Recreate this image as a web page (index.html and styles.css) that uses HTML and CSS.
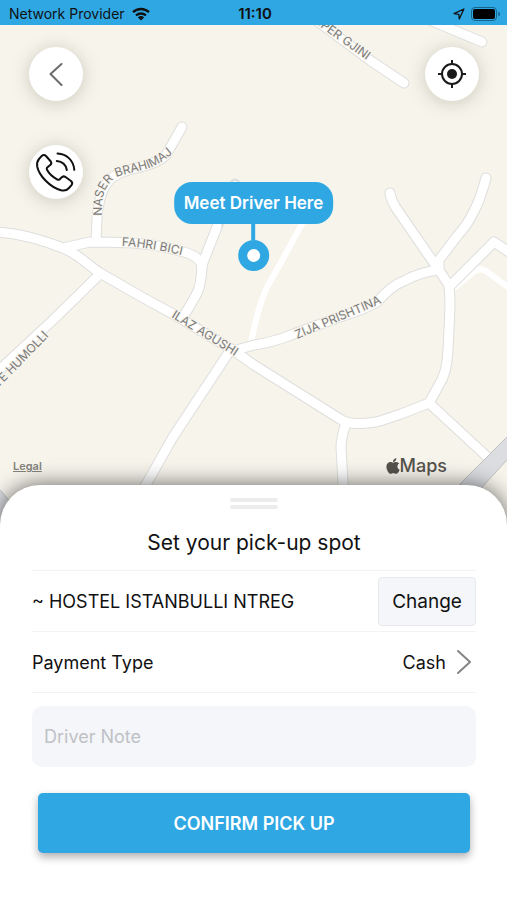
FILE: index.html
```html
<!DOCTYPE html>
<html lang="en">
<head>
  <meta charset="UTF-8" />
  <meta name="viewport" content="width=device-width, initial-scale=1.0"/>
  <title>Set your pick-up spot</title>
  <link rel="stylesheet" href="styles.css">
</head>
<body>
  <header class="status-bar">
    <div class="carrier">
      <span>Network Provider</span>
      <svg width="20" height="14" viewBox="0 0 18 14" fill="none" stroke="currentColor" stroke-width="2.4">
        <path d="M1 5.2a11.6 11.6 0 0 1 16 0"/>
        <path d="M4 8.5a7.3 7.3 0 0 1 10 0"/>
        <path d="M9 13.5 5.9 10.4a4.4 4.4 0 0 1 6.2 0z" fill="currentColor" stroke="none"/>
      </svg>
    </div>
    <time class="clock">11:10</time>
    <div class="indicators">
      <svg width="12" height="12" viewBox="0 0 12 12" fill="none" stroke="currentColor" stroke-width="1.3" stroke-linejoin="round">
        <path d="M10.9 1 1 5.6l4.8.7.5 4.7z"/>
      </svg>
      <svg width="30" height="14" viewBox="0 0 30 14">
        <rect x="0.5" y="0.5" width="25" height="13" rx="3.5" fill="none" stroke="#17658f"/>
        <rect x="2" y="2" width="22" height="10" rx="2" fill="#000"/>
        <path d="M27.3 4.5c2.4 1 2.4 4 0 5z" fill="#17658f"/>
      </svg>
    </div>
  </header>

  <section class="map">
    <svg class="map-canvas" viewBox="0 25 507 500" preserveAspectRatio="xMidYMid slice">
      <defs>
        <g id="roads">
          <path d="M-5 232C20 233 42 240 63 248C78 254 88 265 100 273L140 296L173 314L233 350L254 365L297 392L340 419Q346 423 355 423.500Q369 424 380 421L401 414L429 403L495 464"/>
          <path d="M63 248L90 242Q110 242 133 243Q160 245 180 251Q202 256 202 268"/>
          <path d="M96 242L97 218Q98 203 103 190Q108 178 120 173Q130 169 140 167Q158 163 166 155L182 127"/>
          <path d="M217 227L202 265Q201 286 197 293Q193 301 183 317"/>
          <path d="M99 275L53 320L-5 374"/>
          <path d="M231 349L173 437L147 483L125 521"/>
          <path d="M233 351L254 345Q274 342 291 335L337 318Q365 309 377 302Q392 285 404 281Q420 272 439 270"/>
          <path d="M390 193Q391 200 396 208L434 263L449 285Q450 296 450 307L448 350Q447 373 439 385L429 403"/>
          <path d="M486 178Q480 201 472 215Q467 225 458 235L439 260V268"/>
          <path d="M449 287L494 242L515 256"/>
          <path d="M346 423Q341 438 341 447L343 483V525"/>
          <path d="M300 8L321 24L371 61L404 83"/>
          <path d="M420 16L444 26L482 42"/>
        </g>
        <path id="way-naser" d="M102 216Q101 196 107 187Q113 177 123 175L146 169Q160 165 174 152"/>
        <path id="way-fahri" d="M122 246Q154 247 200 260"/>
        <path id="way-ilaz" d="M171 317L233 355L260 373"/>
        <path id="way-zija" d="M297 339L337 322Q362 312 395 297"/>
        <path id="way-humolli" d="M-6 392L15 371L80 304"/>
        <path id="way-gjini" d="M314 22L323 29L393 79"/>
      </defs>

      <path class="minor-road" d="M303 222L284 257L267 287Q257 310 251 343"/>
      <path class="minor-road" d="M453 289L472 273Q479 267 486 271L512 290"/>
      <path class="road-edge" d="M235 184L217 227"/>
      <use href="#roads" class="road-edge"/>
      <path class="minor-road" d="M235 184L217 227"/>
      <use href="#roads" class="road-fill"/>
      <path class="highway" d="M520 424L507 437L461 483L430 520H460L484 485L507 460L520 448z"/>
      <path class="highway" d="M-5 485L2 492L12 504V530H-5z"/>

      <g class="street-name">
        <text><textPath href="#way-naser">NASER BRAHIMAJ</textPath></text>
        <text><textPath href="#way-fahri">FAHRI BICI</textPath></text>
        <text><textPath href="#way-ilaz">ILAZ AGUSHI</textPath></text>
        <text><textPath href="#way-zija">ZIJA PRISHTINA</textPath></text>
        <text><textPath href="#way-humolli">LTE HUMOLLI</textPath></text>
        <text><textPath href="#way-gjini">SPER GJINI</textPath></text>
      </g>
    </svg>

    <div class="map-controls">
      <div class="control-group">
        <button class="round-btn" aria-label="Back">
          <svg width="14" height="24" viewBox="0 0 14 24" fill="none" stroke="#6b6b6b" stroke-width="2" stroke-linecap="round" stroke-linejoin="round">
            <path d="M12.500 2 1.500 12l11 11"/>
          </svg>
        </button>
        <button class="round-btn" aria-label="Call driver">
          <svg width="42" height="42" viewBox="0 0 42 42" fill="none" stroke="#111" stroke-width="2" stroke-linecap="round" stroke-linejoin="round">
            <path d="M6.500 5.200 4 8Q1.500 11 2.200 15.500C4 24.500 14.500 36 26 39.300Q31 40.500 34 37L36.500 34.200Q38.200 32 36 30L30.500 26Q28.300 24.500 26.500 26.500L24.500 28.500Q23.500 29.200 22 28.400Q15 24.500 12 18.800Q11.300 17.500 12.200 16.500L15.500 13.800Q17 12.300 15.800 10.500L11 5Q8.800 3 6.500 5.200z"/>
            <path d="M22.500 2.500C32 3 38.500 9.500 39.300 18.800"/>
            <path d="M21.800 10Q30.500 10.800 31.800 19"/>
          </svg>
        </button>
      </div>
      <button class="round-btn" aria-label="My location">
        <svg width="30" height="30" viewBox="0 0 30 30" fill="none" stroke="#1a1a1a" stroke-width="2">
          <circle cx="15" cy="15" r="10"/>
          <circle cx="15" cy="15" r="5" fill="#1a1a1a" stroke="none"/>
          <path d="M15 1v4M15 25v4M1 15h4M25 15h4"/>
        </svg>
      </button>
    </div>

    <div class="pin">
      <span class="pin-label">Meet Driver Here</span>
      <span class="pin-stem"></span>
      <span class="pin-dot"></span>
    </div>

    <div class="attribution">
      <a class="legal" href="#">Legal</a>
      <span class="maps-logo">
        <svg width="14" height="18" viewBox="0 0 384 512" fill="currentColor">
          <path d="M318.700 268.700c-.2-36.700 16.400-64.400 50-84.800-18.800-26.900-47.200-41.700-84.700-44.600-35.500-2.800-74.300 20.700-88.500 20.700-15 0-49.400-19.700-76.400-19.700C63.300 141.200 4 184.800 4 273.500q0 39.300 14.400 81.200c12.800 36.700 59 126.700 107.200 125.200 25.200-.6 43-17.900 75.800-17.900 31.800 0 48.300 17.900 76.400 17.900 48.600-.7 90.400-82.500 102.600-119.300-65.200-30.700-61.700-90-61.700-91.900zm-56.600-164.200c27.300-32.400 24.800-61.900 24-72.500-24.100 1.400-52 16.400-67.900 34.900-17.500 19.800-27.800 44.300-25.600 71.900 26.100 2 49.900-11.400 69.500-34.300z"/>
        </svg>
        Maps
      </span>
    </div>
  </section>

  <main class="sheet">
    <div class="handle"><span></span><span></span></div>
    <h1>Set your pick-up spot</h1>
    <div class="row">
      <span>~ HOSTEL ISTANBULLI NTREG</span>
      <button class="change-btn">Change</button>
    </div>
    <button class="row payment">
      <span>Payment Type</span>
      <span class="payment-value">
        Cash
        <svg width="14" height="26" viewBox="0 0 14 26" fill="none" stroke="#858585" stroke-width="2" stroke-linecap="round" stroke-linejoin="round">
          <path d="M1 2l12 11L1 24"/>
        </svg>
      </span>
    </button>
    <input class="note" type="text" placeholder="Driver Note" aria-label="Driver Note">
    <button class="confirm-btn">CONFIRM PICK UP</button>
  </main>
</body>
</html>
```

FILE: styles.css
```css
:root {
  --blue: #2ea7e3;
  --land: #f7f4ec;
  --text: #111111;
  --field: #f4f6fa;
  --line: #f3f3f3;
}

* {
  box-sizing: border-box;
  margin: 0;
  padding: 0;
}

body {
  font-family: Inter, 'Liberation Sans', sans-serif;
  background-color: #fff;
  color: var(--text);
  display: flex;
  flex-direction: column;
  min-height: 100vh;
}

button,
input {
  font-family: inherit;
  color: inherit;
  border: none;
}

button {
  cursor: pointer;
}

/* status bar */
.status-bar {
  display: grid;
  grid-template-columns: 1fr auto 1fr;
  align-items: center;
  height: 25px;
  padding: 2px 6px 0 9px;
  background-color: var(--blue);
  font-size: 14px;
}

.carrier,
.indicators {
  display: flex;
  align-items: center;
  gap: 6px;
}

.indicators {
  justify-content: flex-end;
}

.clock {
  font-size: 15px;
  font-weight: 600;
}

/* map */
.map {
  position: relative;
  flex: 1;
  min-height: 400px;
  background-color: var(--land);
  overflow: hidden;
}

.map-canvas {
  position: absolute;
  width: 100%;
  height: 100%;
}

.road-edge,
.road-fill,
.minor-road {
  fill: none;
  stroke-linecap: round;
  stroke-linejoin: round;
}

.road-edge {
  stroke: #dededc;
  stroke-width: 11px;
}

.road-fill {
  stroke: #fff;
  stroke-width: 9px;
}

.minor-road {
  stroke: #fff;
  stroke-width: 6px;
}

.highway {
  fill: #dcdde1;
  stroke: #bfc0c3;
}

.street-name {
  font-size: 12px;
  fill: #7b7b7b;
  stroke: var(--land);
  stroke-width: 2px;
  paint-order: stroke;
}

.map-controls {
  position: relative;
  display: flex;
  justify-content: space-between;
  align-items: flex-start;
  padding: 22px 28px 0 29px;
}

.control-group {
  display: flex;
  flex-direction: column;
  gap: 44px;
}

.round-btn {
  display: flex;
  align-items: center;
  justify-content: center;
  width: 54px;
  height: 54px;
  border-radius: 50%;
  background-color: #fff;
  box-shadow: 0 2px 18px rgba(90, 90, 60, 0.28);
}

.pin {
  position: absolute;
  top: 157px;
  left: 50%;
  transform: translateX(-50%);
  display: flex;
  flex-direction: column;
  align-items: center;
}

.pin-label {
  padding: 0 10px;
  border-radius: 18px;
  background-color: var(--blue);
  color: #fff;
  font-size: 17px;
  font-weight: 600;
  line-height: 42px;
  white-space: nowrap;
}

.pin-stem {
  width: 4px;
  height: 16px;
  background-color: var(--blue);
}

.pin-dot {
  width: 31px;
  height: 31px;
  border: 9px solid var(--blue);
  border-radius: 50%;
  background-color: #fff;
}

.attribution {
  position: absolute;
  left: 13px;
  right: 60px;
  bottom: 48px;
  display: flex;
  align-items: center;
  justify-content: space-between;
  line-height: 22px;
}

.legal {
  color: #84827d;
  font-size: 11px;
  font-weight: 600;
}

.maps-logo {
  display: flex;
  align-items: center;
  color: #55524c;
  font-size: 18px;
  font-weight: 500;
}

/* bottom sheet */
.sheet {
  position: relative;
  display: flex;
  flex-direction: column;
  margin-top: -40px;
  padding: 13px 31px 47px 32px;
  border-radius: 40px 40px 0 0;
  background-color: #fff;
  box-shadow: 0 0 22px rgba(0, 0, 0, 0.6);
}

.handle {
  display: flex;
  flex-direction: column;
  align-items: center;
  gap: 3px;
}

.handle span {
  width: 48px;
  height: 4px;
  border-radius: 2px;
  background-color: #ececec;
}

h1 {
  padding: 20px 0 13px;
  font-size: 21px;
  font-weight: 400;
  line-height: 28px;
  text-align: center;
}

.row {
  display: flex;
  align-items: center;
  justify-content: space-between;
  height: 61px;
  border-top: 1px solid var(--line);
  background: none;
  font-size: 18px;
}

.payment {
  height: 62px;
  border-bottom: 1px solid var(--line);
}

.payment-value {
  display: flex;
  align-items: center;
  gap: 11px;
  padding-right: 5px;
}

.change-btn {
  width: 98px;
  height: 49px;
  border: 1px solid #e6e9ed;
  border-radius: 4px;
  background-color: var(--field);
  font-size: 19px;
}

.note {
  width: 100%;
  height: 61px;
  margin-top: 13px;
  padding: 0 12px;
  border-radius: 10px;
  background-color: var(--field);
  font-size: 18px;
}

.note::placeholder {
  color: #bfc1c5;
}

.confirm-btn {
  height: 60px;
  margin: 26px 6px 0;
  border-radius: 5px;
  background-color: var(--blue);
  box-shadow: 0 4px 9px rgba(0, 0, 0, 0.32);
  color: #fff;
  font-size: 18px;
  font-weight: 600;
}
```
